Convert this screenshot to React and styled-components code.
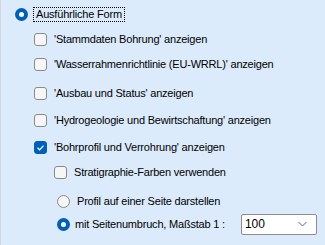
import React from "react";
import styled, { createGlobalStyle } from "styled-components";

const Global = createGlobalStyle`
  html, body { margin: 0; padding: 0; }
  body {
    background: #dcebfb;
    font-family: "Liberation Sans", Arial, sans-serif;
    font-size: 11px;
    letter-spacing: -0.2px;
    color: #000;
  }
`;

const Panel = styled.div`
  width: 325px;
  height: 245px;
  box-sizing: border-box;
  border-left: 1px solid #d4d8dc;
  background: #dcebfb;
  display: flex;
  flex-direction: column;
  overflow: hidden;
`;

const Row = styled.div`
  display: flex;
  align-items: center;
  height: 16px;
  margin-top: ${(p) => p.$top}px;
  padding-left: ${(p) => p.$indent}px;
  gap: ${(p) => p.$gap ?? 7}px;
`;

const Label = styled.span`
  white-space: nowrap;
  line-height: 14px;
`;

const FocusLabel = styled.span`
  white-space: nowrap;
  line-height: 13px;
  padding: 0 2px;
  border: 1px dotted #000;
  margin-left: -3px;
`;

const CheckBox = styled.span`
  box-sizing: border-box;
  width: 13px;
  height: 13px;
  border-radius: 3px;
  flex: none;
  display: flex;
  align-items: center;
  justify-content: center;
  border: 1px solid ${(p) => (p.$checked ? "#005fb8" : "#8a8a8a")};
  background: ${(p) => (p.$checked ? "#005fb8" : "#f6f6f6")};
`;

const Radio = styled.span`
  box-sizing: border-box;
  width: 13px;
  height: 13px;
  border-radius: 50%;
  flex: none;
  display: flex;
  align-items: center;
  justify-content: center;
  border: ${(p) => (p.$checked ? "none" : "1px solid #8a8a8a")};
  background: ${(p) => (p.$checked ? "#005fb8" : "#f6f6f6")};
  &::after {
    content: "";
    display: ${(p) => (p.$checked ? "block" : "none")};
    width: 5px;
    height: 5px;
    border-radius: 50%;
    background: #fff;
  }
`;

const Select = styled.div`
  box-sizing: border-box;
  width: 76px;
  height: 21px;
  margin-left: 11px;
  background: #fff;
  border: 1px solid #8c8c8c;
  border-radius: 2px;
  display: flex;
  align-items: center;
  justify-content: space-between;
  padding: 0 9px 0 3px;
  font-size: 12px;
  letter-spacing: 0;
`;

const Check = () => (
  <svg width="9" height="9" viewBox="0 0 9 9">
    <polyline points="1.5,4.8 3.6,6.8 7.5,2.6" fill="none" stroke="#fff" strokeWidth="1.2" />
  </svg>
);

const Chevron = () => (
  <svg width="9" height="6" viewBox="0 0 9 6">
    <polyline points="0.5,1 4.5,5 8.5,1" fill="none" stroke="#606060" strokeWidth="1" />
  </svg>
);

const items = [
  { top: 9, text: "'Stammdaten Bohrung' anzeigen" },
  { top: 9, text: "'Wasserrahmenrichtlinie (EU-WRRL)' anzeigen" },
  { top: 13, text: "'Ausbau und Status' anzeigen" },
  { top: 11, text: "'Hydrogeologie und Bewirtschaftung' anzeigen" },
  { top: 11, text: "'Bohrprofil und Verrohrung' anzeigen", checked: true },
];

export default function App() {
  return (
    <>
      <Global />
      <Panel>
        <Row $top={6} $indent={14} $gap={8}>
          <Radio $checked />
          <FocusLabel>Ausführliche Form</FocusLabel>
        </Row>
        {items.map((it) => (
          <Row key={it.text} $top={it.top} $indent={33}>
            <CheckBox $checked={it.checked}>{it.checked && <Check />}</CheckBox>
            <Label>{it.text}</Label>
          </Row>
        ))}
        <Row $top={9} $indent={53}>
          <CheckBox />
          <Label>Stratigraphie-Farben verwenden</Label>
        </Row>
        <Row $top={13} $indent={56} $gap={7}>
          <Radio />
          <Label>Profil auf einer Seite darstellen</Label>
        </Row>
        <Row $top={7} $indent={56} $gap={5}>
          <Radio $checked />
          <Label>mit Seitenumbruch, Maßstab 1 :</Label>
          <Select>
            <span>100</span>
            <Chevron />
          </Select>
        </Row>
      </Panel>
    </>
  );
}
